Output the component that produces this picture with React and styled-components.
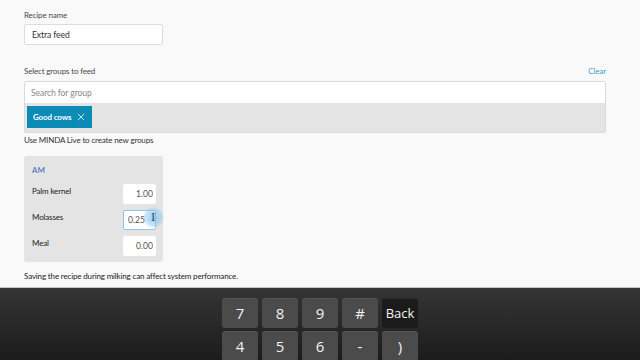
import React, { useState } from "react";
import styled, { createGlobalStyle } from "styled-components";

const GlobalStyle = createGlobalStyle`
  html, body {
    margin: 0;
    padding: 0;
    background: #f9f9f9;
    font-family: "Lato", "Open Sans", sans-serif;
    overflow: hidden;
  }
`;

const feeds = [
  { name: "Palm kernel", value: "1.00" },
  { name: "Molasses", value: "0.25", focused: true },
  { name: "Meal", value: "0.00" },
];

const keyRows = [
  ["7", "8", "9", "#", "Back"],
  ["4", "5", "6", "-", ")"],
];

const App = () => {
  const [recipe, setRecipe] = useState("Extra feed");
  const [groups, setGroups] = useState(["Good cows"]);

  return (
    <>
      <GlobalStyle />
      <Screen>
        <Content>
          <Label>Recipe name</Label>
          <NameInput value={recipe} onChange={(e) => setRecipe(e.target.value)} />

          <GroupHeader>
            <Label>Select groups to feed</Label>
            <ClearLink onClick={() => setGroups([])}>Clear</ClearLink>
          </GroupHeader>
          <GroupBox>
            <SearchInput placeholder="Search for group" />
            <ChipArea>
              {groups.map((g) => (
                <Chip key={g}>
                  {g}
                  <svg width="8" height="8" viewBox="0 0 10 10">
                    <path d="M1 1L9 9M9 1L1 9" stroke="#cfe9f3" strokeWidth="1.2" />
                  </svg>
                </Chip>
              ))}
            </ChipArea>
          </GroupBox>
          <Hint>Use MINDA Live to create new groups</Hint>

          <Panel>
            <PanelTitle>AM</PanelTitle>
            {feeds.map((f) => (
              <FeedRow key={f.name}>
                <FeedName>{f.name}</FeedName>
                <AmountWrap>
                  <Amount $focused={f.focused} defaultValue={f.value} />
                  {f.focused && (
                    <>
                      <Glow />
                      <Cursor>I</Cursor>
                    </>
                  )}
                </AmountWrap>
              </FeedRow>
            ))}
          </Panel>
          <Warning>Saving the recipe during milking can affect system performance.</Warning>
        </Content>

        <Keyboard>
          <KeyGrid>
            {keyRows.flat().map((k) => (
              <Key key={k} $dark={k === "Back"} $small={k === "Back"}>
                {k}
              </Key>
            ))}
          </KeyGrid>
        </Keyboard>
      </Screen>
    </>
  );
};

const Screen = styled.div`
  width: 640px;
  height: 360px;
  display: flex;
  flex-direction: column;
`;

const Content = styled.div`
  height: 287px;
  padding: 10px 34px 0 24px;
  box-sizing: border-box;
  display: flex;
  flex-direction: column;
`;

const Label = styled.div`
  font-size: 8px;
  letter-spacing: -0.15px;
  color: #4a4a4a;
  line-height: 11px;
`;

const NameInput = styled.input`
  margin-top: 3px;
  width: 139px;
  height: 21px;
  box-sizing: border-box;
  border: 1px solid #dcdcdc;
  border-radius: 2px;
  background: #fff;
  padding: 0 7px;
  font-family: inherit;
  font-size: 8.6px;
  letter-spacing: -0.1px;
  color: #333;
  outline: none;
`;

const GroupHeader = styled.div`
  margin-top: 21px;
  display: flex;
  justify-content: space-between;
  align-items: flex-end;
`;

const ClearLink = styled.span`
  font-size: 8px;
  letter-spacing: -0.1px;
  color: #3a9bd0;
  cursor: pointer;
  line-height: 11px;
`;

const GroupBox = styled.div`
  margin-top: 4px;
  border-radius: 2px;
  background: #e4e4e4;
  border: 1px solid #dadada;
  box-sizing: border-box;
  display: flex;
  flex-direction: column;
`;

const SearchInput = styled.input`
  height: 21px;
  border: none;
  background: #fff;
  padding: 0 6px;
  font-family: inherit;
  font-size: 8.6px;
  letter-spacing: -0.1px;
  color: #333;
  outline: none;

  &::placeholder {
    color: #8a8a8a;
  }
`;

const ChipArea = styled.div`
  padding: 3px 2px 4px;
  display: flex;
  gap: 4px;
`;

const Chip = styled.div`
  height: 22px;
  display: flex;
  align-items: center;
  gap: 6px;
  padding: 0 7px 0 6px;
  background: #0b8bb5;
  color: #fff;
  font-size: 8px;
  letter-spacing: -0.15px;
  font-weight: 700;
`;

const Hint = styled.div`
  margin-top: 2px;
  font-size: 8px;
  letter-spacing: -0.15px;
  color: #333;
  line-height: 11px;
`;

const Panel = styled.div`
  margin-top: 10px;
  width: 139px;
  height: 106px;
  box-sizing: border-box;
  background: #e4e4e4;
  border-radius: 3px;
  padding: 9px 8px 0 8px;
  display: flex;
  flex-direction: column;
  gap: 6px;
`;

const PanelTitle = styled.div`
  font-size: 8px;
  color: #3d67b5;
  line-height: 11px;
  margin-bottom: -1px;
`;

const FeedRow = styled.div`
  display: flex;
  justify-content: space-between;
  align-items: center;
`;

const FeedName = styled.div`
  font-size: 8px;
  letter-spacing: -0.15px;
  color: #222;
`;

const AmountWrap = styled.div`
  position: relative;
  width: 33px;
  height: 20px;
  margin-right: -1px;
`;

const Amount = styled.input`
  width: 100%;
  height: 100%;
  box-sizing: border-box;
  border: 1px solid ${(p) => (p.$focused ? "#8cc6ee" : "#fff")};
  border-radius: 2px;
  background: #fff;
  text-align: ${(p) => (p.$focused ? "left" : "right")};
  padding: 0 ${(p) => (p.$focused ? "4px" : "2px")};
  font-family: inherit;
  font-size: 8.6px;
  color: #555;
  outline: none;
`;

const Glow = styled.div`
  position: absolute;
  left: 20px;
  top: 0;
  width: 21px;
  height: 21px;
  border-radius: 50%;
  background: radial-gradient(circle, rgba(120, 190, 240, 0.75) 0%, rgba(140, 200, 245, 0.45) 55%, rgba(160, 210, 250, 0) 75%);
  pointer-events: none;
`;

const Cursor = styled.div`
  position: absolute;
  left: 28px;
  top: 4px;
  font-family: "DejaVu Serif", serif;
  font-size: 11px;
  color: #444;
  pointer-events: none;
`;

const Warning = styled.div`
  margin-top: 9px;
  font-size: 8px;
  letter-spacing: -0.15px;
  color: #222;
  line-height: 11px;
`;

const Keyboard = styled.div`
  flex: 1;
  border-top: 1px solid #c4c4c4;
  background: linear-gradient(#353535, #1c1c1c);
  display: flex;
  justify-content: center;
  padding-top: 10px;
  overflow: hidden;
`;

const KeyGrid = styled.div`
  display: grid;
  grid-template-columns: repeat(5, 36px);
  grid-auto-rows: 30px;
  gap: 3px 4px;
`;

const Key = styled.button`
  border: none;
  border-radius: 3px;
  padding: 0;
  background: ${(p) => (p.$dark ? "#1b1b1b" : "#4b4b4b")};
  box-shadow: inset 0 1px 0 rgba(255, 255, 255, 0.05);
  color: #f2f2f2;
  font-family: "Open Sans", "Noto Sans", sans-serif;
  font-size: ${(p) => (p.$small ? "13px" : "15px")};
  display: flex;
  align-items: center;
  justify-content: center;
`;

export default App;
